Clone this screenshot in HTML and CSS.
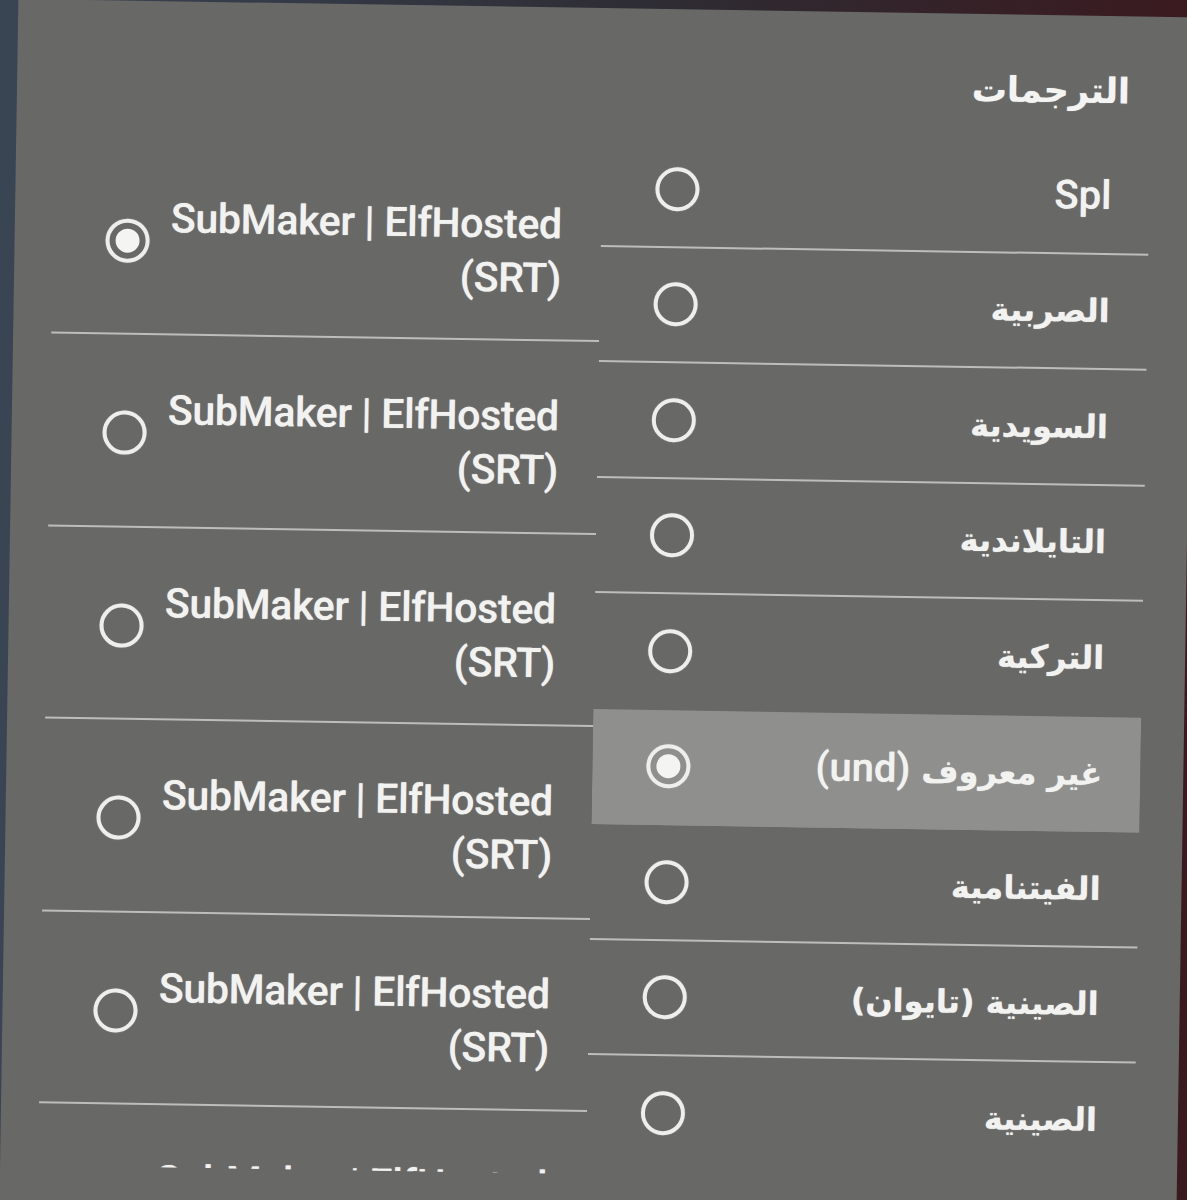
FILE: index.html
```html
<!DOCTYPE html>
<html lang="ar" dir="rtl">
<head>
<meta charset="utf-8">
<title>الترجمات</title>
<link rel="stylesheet" href="styles.css">
</head>
<body>
<div class="panel">
  <h1 class="title">الترجمات</h1>
  <div class="columns">
    <ul class="list tracks">
      <li class="item"><span class="label latin">Spl</span><span class="radio"></span></li>
      <li class="item"><span class="label">الصربية</span><span class="radio"></span></li>
      <li class="item"><span class="label">السويدية</span><span class="radio"></span></li>
      <li class="item"><span class="label">التايلاندية</span><span class="radio"></span></li>
      <li class="item before-focus"><span class="label">التركية</span><span class="radio"></span></li>
      <li class="item focused"><span class="label">غير معروف <span class="latin">(und)</span></span><span class="radio checked"></span></li>
      <li class="item"><span class="label">الفيتنامية</span><span class="radio"></span></li>
      <li class="item"><span class="label">الصينية (تايوان)</span><span class="radio"></span></li>
      <li class="item"><span class="label">الصينية</span><span class="radio"></span></li>
    </ul>
    <ul class="list sources">
      <li class="source"><span class="source-label">SubMaker | ElfHosted (SRT)</span><span class="radio checked"></span></li>
      <li class="source"><span class="source-label">SubMaker | ElfHosted (SRT)</span><span class="radio"></span></li>
      <li class="source"><span class="source-label">SubMaker | ElfHosted (SRT)</span><span class="radio"></span></li>
      <li class="source"><span class="source-label">SubMaker | ElfHosted (SRT)</span><span class="radio"></span></li>
      <li class="source"><span class="source-label">SubMaker | ElfHosted (SRT)</span><span class="radio"></span></li>
      <li class="source"><span class="source-label">SubMaker | ElfHosted (SRT)</span><span class="radio"></span></li>
    </ul>
  </div>
</div>
</body>
</html>
```

FILE: styles.css
```css
html, body {
  margin: 0;
  padding: 0;
}

body {
  width: 1187px;
  height: 1200px;
  overflow: hidden;
  background: linear-gradient(90deg, #3a4554 0%, #2e2c34 55%, #3a1a1f 100%);
  font-family: Roboto, "DejaVu Sans", sans-serif;
  color: #f2f2f0;
}

.panel {
  box-sizing: border-box;
  width: 1177px;
  height: 1260px;
  margin: 8px 1px 0 9px;
  padding: 53px 43px 0 38px;
  background: #686866;
  transform: rotate(0.9deg);
  transform-origin: 584px 592px;
}

.title {
  margin: 0 0 26px 0;
  padding-right: 21px;
  font-family: "DejaVu Sans", sans-serif;
  font-size: 35px;
  line-height: 44px;
  font-weight: bold;
  color: #f4f4f2;
  text-shadow: 0 0 1px rgba(255, 255, 255, 0.6);
}

.columns {
  display: grid;
  grid-template-columns: 1fr 1fr;
  align-items: start;
  height: 1043px;
}

.list {
  list-style: none;
  margin: 0;
  padding: 0;
  overflow: hidden;
}

.tracks {
  height: 1036px;
}

.item {
  box-sizing: border-box;
  height: 115.5px;
  display: flex;
  align-items: center;
  padding: 0 38px 0 54px;
  border-bottom: 2px solid #bdbdbb;
}

.item.before-focus {
  border-bottom-color: transparent;
}

.item.focused {
  background: #8f8f8d;
  border-bottom-color: #8f8f8d;
}

.label {
  font-family: "DejaVu Sans", sans-serif;
  font-size: 32px;
  font-weight: bold;
  line-height: 50px;
  text-shadow: 0 0 1px rgba(255, 255, 255, 0.7);
}

.latin {
  font-family: Roboto, sans-serif;
  font-size: 40px;
  font-weight: 500;
}

.radio {
  box-sizing: border-box;
  width: 44px;
  height: 44px;
  margin-right: auto;
  flex: none;
  border: 4px solid #eeeeec;
  border-radius: 50%;
  display: flex;
  align-items: center;
  justify-content: center;
  box-shadow: 0 0 1px rgba(255, 255, 255, 0.6);
}

.radio.checked::after {
  content: "";
  width: 24px;
  height: 24px;
  border-radius: 50%;
  background: #f4f4f2;
}

.sources {
  height: 1043px;
  box-sizing: border-box;
  padding-top: 18.5px;
}

.source {
  box-sizing: border-box;
  height: 192.5px;
  display: flex;
  align-items: center;
  padding: 0 39px 0 53px;
  border-bottom: 2px solid #bdbdbb;
}

.source .radio {
  margin-top: 6px;
}

.source-label {
  width: 400px;
  padding-top: 14px;
  direction: ltr;
  text-align: right;
  font-size: 41px;
  line-height: 54px;
  font-weight: 500;
  letter-spacing: -0.3px;
  text-shadow: 0 0 1px rgba(255, 255, 255, 0.7);
}
```
